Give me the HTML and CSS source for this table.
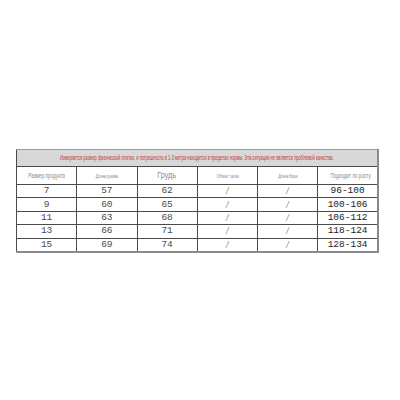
FILE: index.html
```html
<!DOCTYPE html>
<html lang="ru">
<head>
<meta charset="utf-8">
<link rel="stylesheet" href="styles.css">
</head>
<body>
<table class="size-table">
  <tr class="note-row">
    <td colspan="6"><div class="note-wrap"><span class="note">Измеряется размер физической плитки, и погрешность в 1-3 метра находится в пределах нормы. Эта ситуация не является проблемой качества.</span></div></td>
  </tr>
  <tr class="head-row">
    <td><span class="h h-md">Размер продукта</span></td>
    <td><span class="h h-xs">Длина рукава</span></td>
    <td><span class="h h-lg">Грудь</span></td>
    <td><span class="h h-xs">Обхват талии</span></td>
    <td><span class="h h-xs blue">Длина брюк</span></td>
    <td><span class="h h-md">Подходит по росту</span></td>
  </tr>
  <tr><td>7</td><td>57</td><td>62</td><td class="sl">/</td><td class="sl">/</td><td class="rg">96-100</td></tr>
  <tr><td>9</td><td>60</td><td>65</td><td class="sl">/</td><td class="sl">/</td><td class="rg">100-106</td></tr>
  <tr><td>11</td><td>63</td><td>68</td><td class="sl">/</td><td class="sl">/</td><td class="rg">106-112</td></tr>
  <tr><td>13</td><td>66</td><td>71</td><td class="sl">/</td><td class="sl">/</td><td class="rg">118-124</td></tr>
  <tr><td>15</td><td>69</td><td>74</td><td class="sl">/</td><td class="sl">/</td><td class="rg">128-134</td></tr>
</table>
</body>
</html>
```

FILE: styles.css
```css
html, body {
  margin: 0;
  padding: 0;
  background: #ffffff;
}

.size-table {
  margin: 149px 0 0 16px;
  width: 363px;
  border-collapse: collapse;
  table-layout: fixed;
  font-family: "Liberation Mono", "DejaVu Sans Mono", monospace;
  font-size: 9.5px;
  color: #4a4a4a;
}

.size-table td {
  border: 1px solid #4a4a4a;
  text-align: center;
  padding: 0;
  height: 12.4px;
  line-height: 12px;
  white-space: nowrap;
  overflow: hidden;
}

.size-table tr > td:last-child {
  border-right: 2px solid #8a8a8a;
}

.size-table tr:last-child > td {
  border-bottom: 2px solid #8a8a8a;
}

.note-row td {
  background: #d8d8d8;
  height: 16px;
  line-height: 16px;
  border-color: #9a9a9a #8a8a8a #4a4a4a #4a4a4a;
}

.note-wrap {
  display: flex;
  justify-content: center;
  height: 16px;
}

.note {
  flex: none;
  font-family: "Liberation Sans", Arial, sans-serif;
  font-size: 6.3px;
  color: #c8373a;
  transform: scaleX(0.64);
  transform-origin: center;
  white-space: nowrap;
}

.head-row td {
  height: 16px;
  line-height: 16px;
}

.h {
  display: inline-block;
  font-family: "Liberation Sans", Arial, sans-serif;
  color: #8a8a8a;
  white-space: nowrap;
}

.h-md {
  font-size: 7.5px;
  transform: scaleX(0.62);
}

.h-xs {
  font-size: 5px;
  transform: scaleX(0.7);
}

.h-lg {
  font-size: 9px;
  transform: scaleX(0.8);
}

.blue {
  color: #7c84a8;
}

.sl {
  color: #8a8a8a;
  font-family: "Liberation Sans", Arial, sans-serif;
  font-size: 9px;
  font-style: italic;
}

.rg {
  color: #222222;
  font-size: 9.5px;
}
```
